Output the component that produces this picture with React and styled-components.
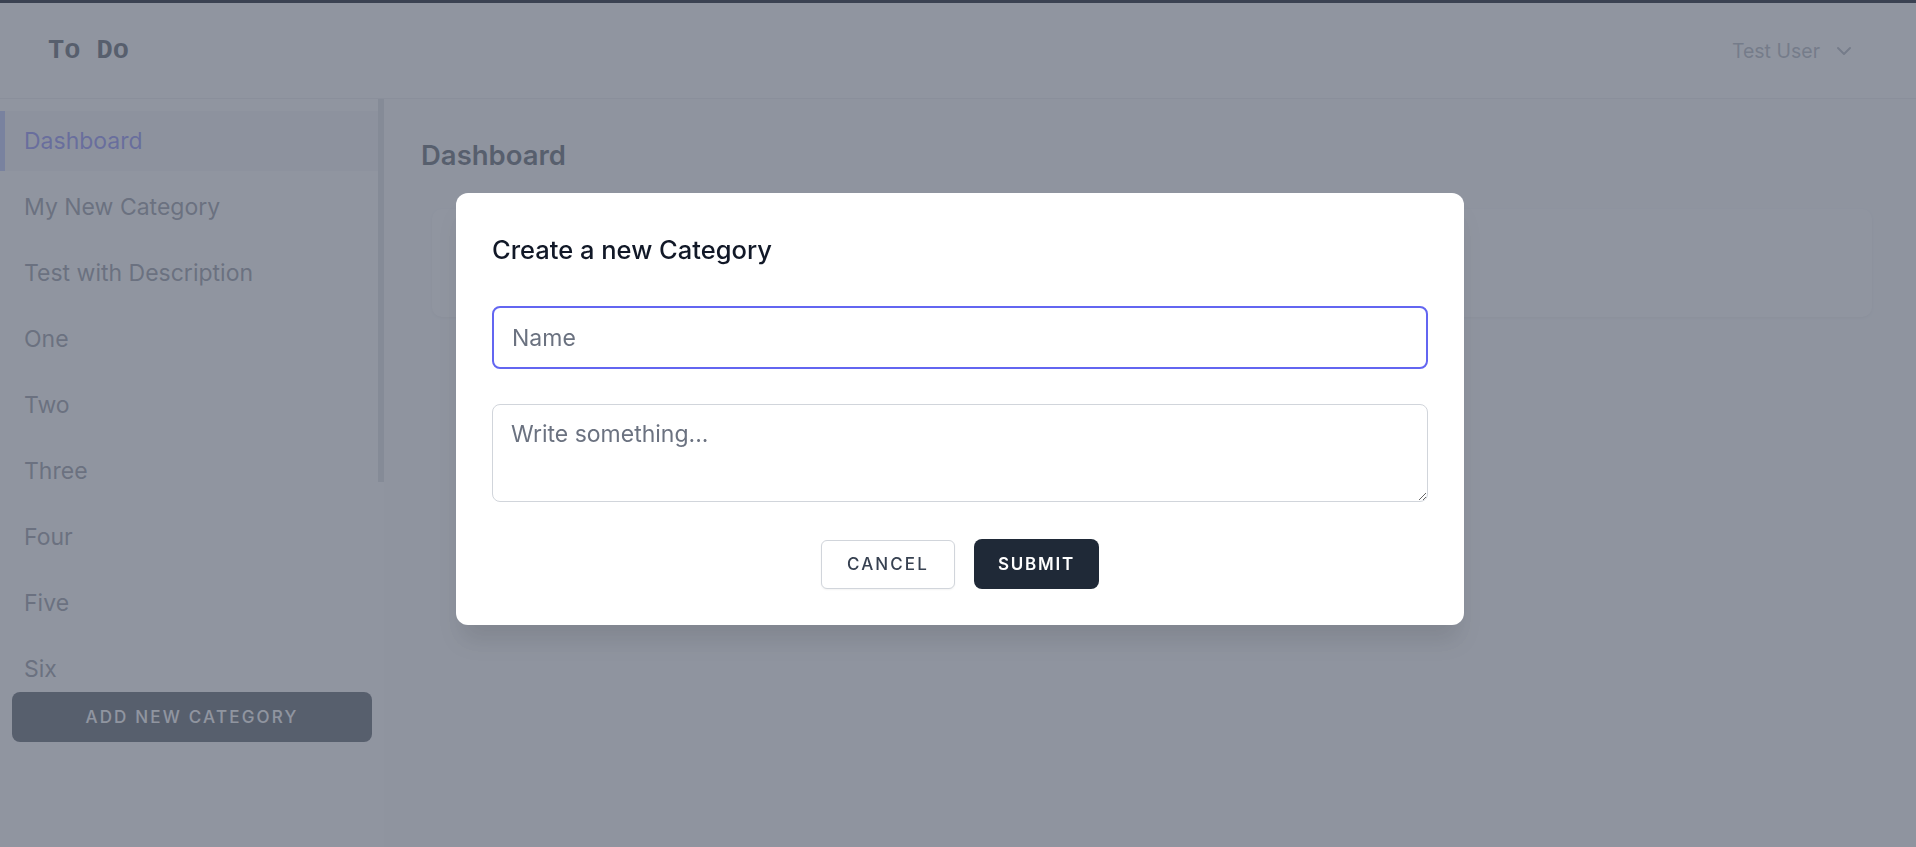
import React from "react";
import styled, { createGlobalStyle } from "styled-components";
import { ChevronDown } from "lucide-react";

const categories = [
  "Dashboard",
  "My New Category",
  "Test with Description",
  "One",
  "Two",
  "Three",
  "Four",
  "Five",
  "Six",
];

const GlobalStyle = createGlobalStyle`
  * { box-sizing: border-box; }
  html, body { margin: 0; height: 100%; }
  body {
    font-family: Inter, "Noto Sans", sans-serif;
    background: #ffffff;
    overflow: hidden;
  }
`;

const TopStrip = styled.div`
  position: relative;
  z-index: 100;
  height: 3px;
  background: #3b4252;
`;

const Header = styled.header`
  height: 96px;
  display: flex;
  align-items: center;
  justify-content: space-between;
  padding: 0 60px 0 48px;
  background: #ffffff;
  border-bottom: 1px solid #e5e7eb;
`;

const Logo = styled.div`
  font-family: "Liberation Mono", "DejaVu Sans Mono", monospace;
  font-weight: 700;
  font-size: 27px;
  color: #1f2937;
`;

const UserMenu = styled.div`
  display: flex;
  align-items: center;
  gap: 12px;
  font-size: 19.5px;
  color: #959ba7;
`;

const Layout = styled.div`
  display: flex;
  height: calc(100vh - 99px);
`;

const Sidebar = styled.aside`
  width: 384px;
  flex-shrink: 0;
  display: flex;
  flex-direction: column;
  background: #ffffff;
`;

const ListArea = styled.div`
  height: 581px;
  display: flex;
`;

const CategoryList = styled.nav`
  flex: 1;
  overflow: hidden;
  padding-top: 12px;
`;

const ScrollRail = styled.div`
  width: 6px;
  flex-shrink: 0;
`;

const ScrollThumb = styled.div`
  height: 383px;
  background: #d1d5db;
`;

const CategoryItem = styled.div`
  height: ${(p) => (p.$last ? "54px" : "60px")};
  margin-bottom: 6px;
  display: flex;
  align-items: ${(p) => (p.$last ? "flex-start" : "center")};
  padding-top: ${(p) => (p.$last ? "16px" : "0")};
  padding-left: 24px;
  font-size: 23px;
  color: ${(p) => (p.$active ? "#6366f1" : "#6b7280")};
  background: ${(p) => (p.$active ? "#f3f4f6" : "transparent")};
  box-shadow: ${(p) => (p.$active ? "inset 5px 0 0 #a5b4fc" : "none")};
`;

const AddButton = styled.button`
  margin: 12px 12px 0;
  height: 50px;
  border: none;
  border-radius: 8px;
  background: #1f2937;
  color: #ffffff;
  font-family: inherit;
  font-size: 17px;
  font-weight: 500;
  letter-spacing: 2.2px;
`;

const Main = styled.main`
  flex: 1;
  background: #f9fafb;
  padding: 40px 44px 0 37px;
`;

const PageTitle = styled.h1`
  margin: 0 0 38px;
  font-size: 27.5px;
  line-height: 32px;
  font-weight: 600;
  color: #1f2937;
`;

const Card = styled.div`
  margin-left: 11px;
  height: 108px;
  background: #ffffff;
  border-radius: 10px;
  box-shadow: 0 1px 3px rgba(0, 0, 0, 0.08);
`;

const Overlay = styled.div`
  position: fixed;
  inset: 0;
  background: rgba(107, 114, 128, 0.75);
  display: flex;
  justify-content: center;
  align-items: flex-start;
  padding: 193px 0 0 4px;
`;

const Modal = styled.div`
  width: 1008px;
  background: #ffffff;
  border-radius: 12px;
  padding: 36px;
  display: flex;
  flex-direction: column;
  box-shadow: 0 20px 25px -5px rgba(0, 0, 0, 0.1);
`;

const ModalTitle = styled.h2`
  margin: 0 0 35px;
  font-size: 25.5px;
  line-height: 42px;
  font-weight: 500;
  color: #111827;
`;

const NameInput = styled.input`
  height: 63px;
  padding: 0 18px;
  border: 2px solid #6366f1;
  border-radius: 8px;
  font-family: inherit;
  font-size: 23px;
  color: #111827;
  outline: none;

  &::placeholder {
    color: #6b7280;
  }
`;

const Description = styled.textarea`
  margin-top: 35px;
  height: 98px;
  padding: 14px 18px;
  border: 1px solid #d1d5db;
  border-radius: 8px;
  font-family: inherit;
  font-size: 23px;
  line-height: 30px;
  resize: vertical;
  outline: none;

  &::placeholder {
    color: #6b7280;
  }
`;

const Actions = styled.div`
  margin-top: 37px;
  display: flex;
  justify-content: center;
  align-items: center;
  gap: 19px;
`;

const ActionButton = styled.button`
  height: ${(p) => (p.$primary ? "50px" : "49px")};
  padding: ${(p) => (p.$primary ? "0 24px" : "0 25px")};
  border-radius: ${(p) => (p.$primary ? "8px" : "6px")};
  border: ${(p) => (p.$primary ? "none" : "1px solid #d1d5db")};
  background: ${(p) => (p.$primary ? "#1f2937" : "#ffffff")};
  color: ${(p) => (p.$primary ? "#ffffff" : "#374151")};
  box-shadow: ${(p) => (p.$primary ? "none" : "0 1px 2px rgba(0,0,0,0.05)")};
  font-family: inherit;
  font-size: 17px;
  font-weight: ${(p) => (p.$primary ? 600 : 500)};
  letter-spacing: ${(p) => (p.$primary ? "1.8px" : "2.1px")};
`;

export default function App() {
  return (
    <>
      <GlobalStyle />
      <TopStrip />
      <Header>
        <Logo>To Do</Logo>
        <UserMenu>
          Test User
          <ChevronDown size={24} strokeWidth={2} />
        </UserMenu>
      </Header>
      <Layout>
        <Sidebar>
          <ListArea>
            <CategoryList>
              {categories.map((name, i) => (
                <CategoryItem
                  key={name}
                  $active={i === 0}
                  $last={i === categories.length - 1}
                >
                  {name}
                </CategoryItem>
              ))}
            </CategoryList>
            <ScrollRail>
              <ScrollThumb />
            </ScrollRail>
          </ListArea>
          <AddButton>ADD NEW CATEGORY</AddButton>
        </Sidebar>
        <Main>
          <PageTitle>Dashboard</PageTitle>
          <Card />
        </Main>
      </Layout>
      <Overlay>
        <Modal>
          <ModalTitle>Create a new Category</ModalTitle>
          <NameInput placeholder="Name" autoFocus />
          <Description placeholder="Write something..." />
          <Actions>
            <ActionButton>CANCEL</ActionButton>
            <ActionButton $primary>SUBMIT</ActionButton>
          </Actions>
        </Modal>
      </Overlay>
    </>
  );
}
